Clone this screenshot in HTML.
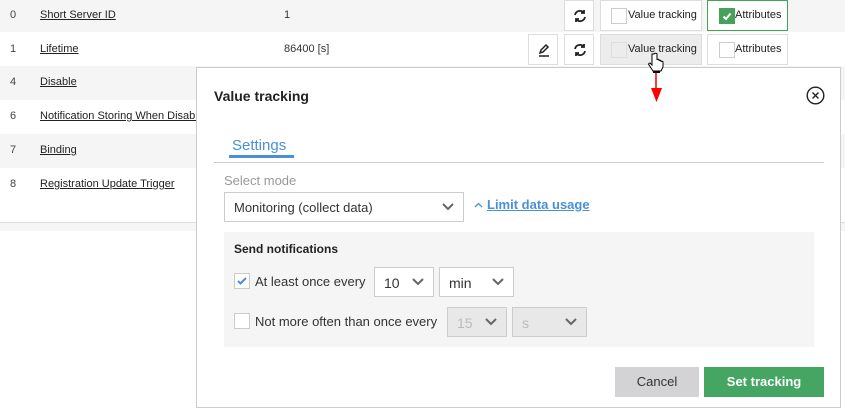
<!DOCTYPE html>
<html><head><meta charset="utf-8"><style>
*{box-sizing:border-box;margin:0;padding:0}
body{width:845px;height:410px;overflow:hidden;background:#fff;font-family:"Liberation Sans",sans-serif;font-size:11px;color:#333;position:relative}
.a{position:absolute}
.row{position:absolute;left:0;width:845px;height:34px}
.g{background:#f5f5f5}
.n{position:absolute;left:10px;top:10px;font-size:11px;color:#444}
.l{position:absolute;left:40px;top:10px;text-decoration:underline;color:#222;white-space:nowrap}
.btn{position:absolute;border:1px solid #ddd;background:#fff;height:31px}
.cb{position:absolute;width:16px;height:16px;border:1px solid #ccc;background:#fff}
.sel{position:absolute;border:1px solid #ccc;background:#fff;height:30px;font-size:14px;color:#333;padding:7px 0 0 9px}
.chev{position:absolute;right:9px;top:9px}
</style></head><body>
<div class="row g" style="top:0;height:32px"><span class="n" style="top:9px">0</span><span class="l" style="top:9px">Short Server ID</span><span class="a" style="left:284px;top:9px">1</span></div>
<div class="row" style="top:32px"><span class="n" style="top:11px">1</span><span class="l" style="top:11px">Lifetime</span><span class="a" style="left:284px;top:11px">86400 [s]</span></div>
<div class="row g" style="top:66px"><span class="n">4</span><span class="l">Disable</span></div>
<div class="row" style="top:100px"><span class="n">6</span><span class="l">Notification Storing When Disabled</span></div>
<div class="row g" style="top:134px"><span class="n">7</span><span class="l">Binding</span></div>
<div class="row" style="top:168px"><span class="n">8</span><span class="l">Registration Update Trigger</span></div>
<div class="a" style="left:0;top:222px;width:845px;height:1px;background:#ddd"></div>
<div class="a" style="left:0;top:223px;width:845px;height:8px;background:#f5f5f5"></div>

<div class="btn" style="left:564px;top:0;width:30px"><svg class="a" style="left:7px;top:7px" width="16" height="16" viewBox="0 0 16 16" fill="none" stroke="#222" stroke-width="1.8"><path d="M3 7a5 5 0 0 1 9-2"/><path d="M13 9a5 5 0 0 1-9 2"/><path d="M12 2v3h-3M4 14v-3h3"/></svg></div>
<div class="btn" style="left:600px;top:0;width:102px"><div class="cb" style="left:10px;top:7px"></div><span class="a" style="left:27px;top:8px;font-size:11px;color:#222">Value tracking</span></div>
<div class="btn" style="left:707px;top:0;width:81px;border-color:#46a25a"><div class="cb" style="left:11px;top:7px;background:#46a25a;border-color:#46a25a"><svg width="14" height="14" viewBox="0 0 14 14"><path d="M3.5 7.5l2.5 2.5L10.5 4.5" stroke="#fff" stroke-width="2" fill="none"/></svg></div><span class="a" style="left:27px;top:8px;color:#222">Attributes</span></div>
<div class="btn" style="left:528px;top:34px;width:30px"><svg class="a" style="left:7px;top:7px" width="16" height="16" viewBox="0 0 16 16" fill="none" stroke="#222" stroke-width="1.5"><path d="M4 11l1-3 5-5 2 2-5 5z"/><path d="M3 14h10"/></svg></div>
<div class="btn" style="left:564px;top:34px;width:30px"><svg class="a" style="left:7px;top:7px" width="16" height="16" viewBox="0 0 16 16" fill="none" stroke="#222" stroke-width="1.8"><path d="M3 7a5 5 0 0 1 9-2"/><path d="M13 9a5 5 0 0 1-9 2"/><path d="M12 2v3h-3M4 14v-3h3"/></svg></div>
<div class="btn" style="left:600px;top:34px;width:102px;background:#ececec"><div class="cb" style="left:10px;top:7px;background:#ececec;border-color:#ddd"></div><span class="a" style="left:27px;top:8px;color:#222">Value tracking</span></div>
<div class="btn" style="left:707px;top:34px;width:81px"><div class="cb" style="left:11px;top:7px"></div><span class="a" style="left:27px;top:8px;color:#222">Attributes</span></div>

<div class="a" style="left:196px;top:67px;width:645px;height:341px;background:#fff;border:1px solid #ccc"></div>
<div class="a" style="left:214px;top:88px;font-size:14px;font-weight:bold;color:#222">Value tracking</div>
<svg class="a" style="left:806px;top:86px" width="19" height="19" viewBox="0 0 19 19" fill="none" stroke="#222" stroke-width="1.4"><circle cx="9.5" cy="9.5" r="8.3"/><path d="M6.5 6.5l6 6M12.5 6.5l-6 6"/></svg>
<svg class="a" style="left:647px;top:52px" width="20" height="52" viewBox="0 0 20 52"><path d="M5 2v11l-2-2c-1 0-2 1-1 2l4 6h8l2-4v-5c0-1-2-1-2 0v-1c0-1-2-1-2 0v-1c0-1-2-1-2 0V2c0-1-3-1-3 0z" fill="#fff" stroke="#000" stroke-width="1"/><rect x="6" y="19" width="7" height="2" fill="#000"/><path d="M9 21v15" stroke="#e00" stroke-width="1.5"/><path d="M4 36h11l-5.5 14z" fill="#f00"/></svg>
<div class="a" style="left:232px;top:137px;font-size:15px;color:#4a90d9">Settings</div>
<div class="a" style="left:229px;top:155px;width:65px;height:3px;background:#4a90d9"></div>
<div class="a" style="left:214px;top:162px;width:610px;height:1px;background:#ccc"></div>
<div class="a" style="left:224px;top:173px;font-size:13px;color:#999">Select mode</div>
<div class="sel" style="left:224px;top:192px;width:240px;height:30px;padding-top:7px;font-size:13px">Monitoring (collect data)<svg class="chev" width="12" height="10" viewBox="0 0 12 10"><path d="M1 2l5 5 5-5" stroke="#666" stroke-width="2" fill="none"/></svg></div>
<svg class="a" style="left:474px;top:202px" width="9" height="6" viewBox="0 0 9 6"><path d="M1 5l3.5-3.5L8 5" stroke="#4a90d9" stroke-width="1.3" fill="none"/></svg>
<div class="a" style="left:487px;top:197px;font-size:13px;font-weight:bold;color:#4a90d9;text-decoration:underline">Limit data usage</div>
<div class="a" style="left:224px;top:232px;width:590px;height:115px;background:#f5f5f5"></div>
<div class="a" style="left:234px;top:242px;font-size:12px;font-weight:bold;color:#222">Send notifications</div>
<div class="cb" style="left:234px;top:273px"><svg width="14" height="14" viewBox="0 0 14 14"><path d="M3 7l2.5 2.5L11 4" stroke="#4a90d9" stroke-width="2" fill="none"/></svg></div>
<div class="a" style="left:255px;top:274px;font-size:13px;color:#333">At least once every</div>
<div class="sel" style="left:374px;top:267px;width:60px;height:30px">10<svg class="chev" width="12" height="10" viewBox="0 0 12 10"><path d="M1 2l5 5 5-5" stroke="#666" stroke-width="2" fill="none"/></svg></div>
<div class="sel" style="left:439px;top:267px;width:75px;height:30px">min<svg class="chev" width="12" height="10" viewBox="0 0 12 10"><path d="M1 2l5 5 5-5" stroke="#666" stroke-width="2" fill="none"/></svg></div>
<div class="cb" style="left:234px;top:313px"></div>
<div class="a" style="left:255px;top:314px;font-size:13px;color:#333">Not more often than once every</div>
<div class="sel" style="left:447px;top:307px;width:60px;height:30px;background:#e8e8e8;color:#bbb">15<svg class="chev" width="12" height="10" viewBox="0 0 12 10"><path d="M1 2l5 5 5-5" stroke="#666" stroke-width="2" fill="none"/></svg></div>
<div class="sel" style="left:512px;top:307px;width:75px;height:30px;background:#e8e8e8;color:#bbb">s<svg class="chev" width="12" height="10" viewBox="0 0 12 10"><path d="M1 2l5 5 5-5" stroke="#666" stroke-width="2" fill="none"/></svg></div>
<div class="a" style="left:615px;top:367px;width:84px;height:30px;background:#d3d3d5;font-size:13px;color:#333;text-align:center;line-height:30px">Cancel</div>
<div class="a" style="left:704px;top:367px;width:120px;height:30px;background:#45a563;font-size:13px;font-weight:bold;color:#fff;text-align:center;line-height:30px">Set tracking</div>
</body></html>
